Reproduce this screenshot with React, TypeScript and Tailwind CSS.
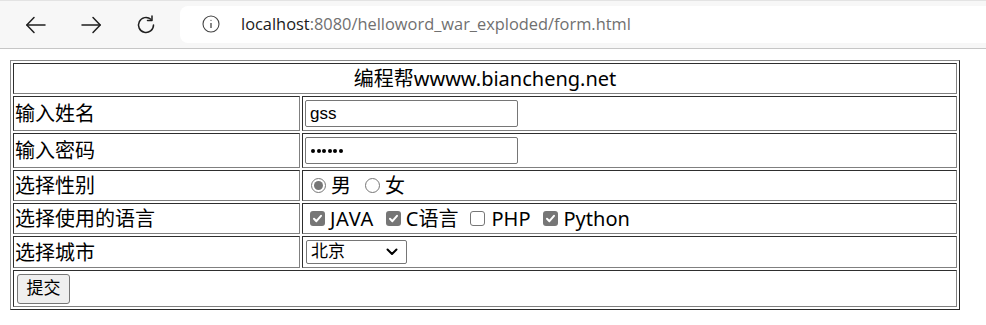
import React from "react";

const FONT = { fontFamily: '"Noto Sans", "Noto Sans CJK SC", sans-serif' };
const CTRL = { fontFamily: '"Liberation Sans", "Noto Sans CJK SC", sans-serif' };

function Back() {
  return (
    <svg width="24" height="24" viewBox="0 0 24 24" fill="none" stroke="#1f1f1f" strokeWidth="1.5" strokeLinecap="round" strokeLinejoin="round">
      <path d="M21 12H3" />
      <path d="M10 4.5 2.8 12 10 19.5" />
    </svg>
  );
}
function Fwd() {
  return (
    <svg width="24" height="24" viewBox="0 0 24 24" fill="none" stroke="#1f1f1f" strokeWidth="1.5" strokeLinecap="round" strokeLinejoin="round">
      <path d="M3 12h18" />
      <path d="M14 4.5 21.2 12 14 19.5" />
    </svg>
  );
}
function Reload() {
  return (
    <svg width="24" height="24" viewBox="0 0 24 24" fill="none" stroke="#1f1f1f" strokeWidth="1.5" strokeLinecap="round" strokeLinejoin="round">
      <path d="M19.5 12a7.5 7.5 0 1 1-2.6-5.7" />
      <path d="M18 3v4.5h-4.5" />
    </svg>
  );
}
function Info() {
  return (
    <svg width="18" height="18" viewBox="0 0 18 18" fill="none" stroke="#444" strokeWidth="1.1">
      <circle cx="9" cy="9" r="8" />
      <path d="M9 8v5" strokeWidth="1.3" />
      <circle cx="9" cy="5.3" r="0.6" fill="#444" stroke="none" />
    </svg>
  );
}

function Box({ checked }: { checked: boolean }) {
  return (
    <span
      className={`inline-flex w-[15px] h-[15px] rounded-[3px] items-center justify-center ${
        checked ? "bg-[#767676]" : "border border-[#767676] bg-white"
      }`}
    >
      {checked && (
        <svg width="11" height="11" viewBox="0 0 11 11" fill="none" stroke="#fff" strokeWidth="2" strokeLinecap="round" strokeLinejoin="round">
          <path d="M2 5.8 4.4 8.2 9 2.8" />
        </svg>
      )}
    </span>
  );
}

function Radio({ checked }: { checked: boolean }) {
  return (
    <span className="inline-flex w-[15px] h-[15px] rounded-full border border-[#767676] bg-white items-center justify-center">
      {checked && <span className="w-[9px] h-[9px] rounded-full bg-[#767676]" />}
    </span>
  );
}

const tdL = "border border-t-[#2e2e2e] border-l-[#2e2e2e] border-r-[#808080] border-b-[#808080] p-[1px] align-middle";

export default function App() {
  return (
    <div className="w-[986px] h-[325px] bg-white overflow-hidden" style={FONT}>
      {/* browser chrome */}
      <div className="h-[49px] bg-[#f7f7f7] border-t border-t-[#e3e3e3] border-b border-b-[#c6c6c6] flex items-center">
        <div className="w-[180px] flex items-center pl-[24px] gap-[31px]">
          <Back />
          <Fwd />
          <Reload />
        </div>
        <div className="flex-1 h-[37px] bg-white rounded-l-[8px] flex items-center pl-[22px] mt-[-1px]">
          <Info />
          <span className="ml-[21px] text-[16.4px]" style={{ fontFamily: '"Open Sans", "Noto Sans", sans-serif' }}>
            <span className="text-[#1b1b1b]">localhost</span>
            <span className="text-[#707070]">:8080/helloword_war_exploded/form.html</span>
          </span>
        </div>
      </div>

      {/* page */}
      <div className="pt-[11px] pl-[10px]">
        <table
          className="w-[950px] border border-t-[#8a8a8a] border-l-[#8a8a8a] border-r-[#2a2a2a] border-b-[#2a2a2a] border-separate border-spacing-[2px] text-[20px] leading-[27px] text-black"
        >
          <tbody>
            <tr>
              <td colSpan={2} className={`${tdL} h-[31px] text-center`}>
                编程帮wwww.biancheng.net
              </td>
            </tr>
            <tr>
              <td className={`${tdL} h-[35px] w-[287px]`}>输入姓名</td>
              <td className={`${tdL} h-[35px]`}>
                <div className="ml-[1px] w-[213px] h-[27px] border border-[#767676] rounded-[2px] flex items-center pl-[4px] text-[17px]" style={CTRL}>
                  gss
                </div>
              </td>
            </tr>
            <tr>
              <td className={`${tdL} h-[35px]`}>输入密码</td>
              <td className={`${tdL} h-[35px]`}>
                <div className="ml-[1px] w-[213px] h-[27px] border border-[#767676] rounded-[2px] flex items-center pl-[5px] gap-[1.6px]">
                  {[0, 1, 2, 3, 4, 5].map((i) => (
                    <span key={i} className="w-[4px] h-[4px] rounded-full bg-black" />
                  ))}
                </div>
              </td>
            </tr>
            <tr>
              <td className={`${tdL} h-[31px]`}>选择性别</td>
              <td className={`${tdL} h-[31px]`}>
                <div className="flex items-center pl-[7px]">
                  <Radio checked />
                  <span className="ml-[5px]">男</span>
                  <span className="ml-[14px] flex items-center">
                    <Radio checked={false} />
                  </span>
                  <span className="ml-[5px]">女</span>
                </div>
              </td>
            </tr>
            <tr>
              <td className={`${tdL} h-[31px]`}>选择使用的语言</td>
              <td className={`${tdL} h-[31px]`}>
                <div className="flex items-center pl-[6px]">
                  <Box checked />
                  <span className="ml-[5px] tracking-[0.6px]">JAVA</span>
                  <span className="ml-[12px] flex items-center"><Box checked /></span>
                  <span className="ml-[5px]">C语言</span>
                  <span className="ml-[12px] flex items-center"><Box checked={false} /></span>
                  <span className="ml-[6px]">PHP</span>
                  <span className="ml-[12px] flex items-center"><Box checked /></span>
                  <span className="ml-[6px]">Python</span>
                </div>
              </td>
            </tr>
            <tr>
              <td className={`${tdL} h-[32px]`}>选择城市</td>
              <td className={`${tdL} h-[32px]`}>
                <div className="ml-[2px] w-[101px] h-[24px] border border-[#767676] rounded-[2px] flex items-center justify-between pl-[4px] pr-[8px] text-[17px] leading-[20px]" style={CTRL}>
                  <span>北京</span>
                  <svg width="12" height="8" viewBox="0 0 12 8" fill="none" stroke="#000" strokeWidth="2" strokeLinecap="round" strokeLinejoin="round">
                    <path d="M1.5 1.5 6 6l4.5-4.5" />
                  </svg>
                </div>
              </td>
            </tr>
            <tr>
              <td colSpan={2} className={`${tdL} h-[37px]`}>
                <button className="ml-[2px] w-[53px] h-[30px] bg-[#efefef] border border-[#767676] rounded-[3px] text-[17px] leading-[20px] flex items-center justify-center" style={CTRL}>
                  提交
                </button>
              </td>
            </tr>
          </tbody>
        </table>
      </div>
    </div>
  );
}
